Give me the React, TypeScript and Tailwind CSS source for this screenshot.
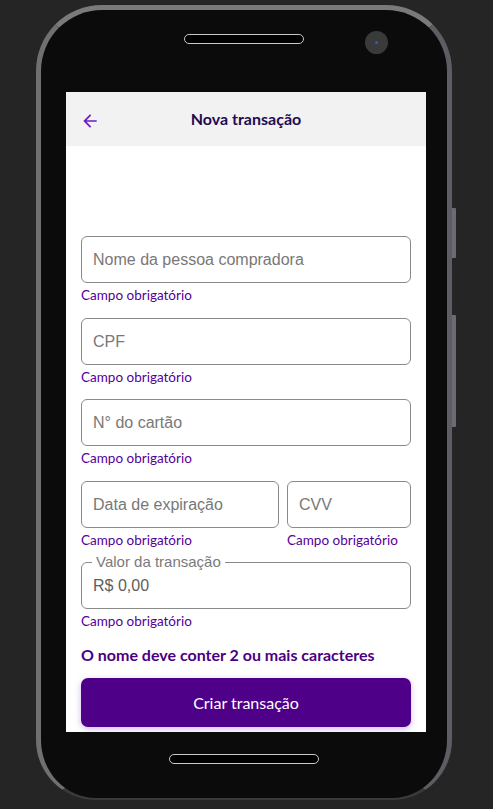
import React from "react";

const lato = { fontFamily: "Lato, 'Noto Sans', sans-serif" };

function Helper() {
  return (
    <div className="mt-[4px] text-[13.5px] leading-[16px] text-[#55009a]" style={lato}>
      Campo obrigatório
    </div>
  );
}

function Field({ placeholder, className = "" }: { placeholder: string; className?: string }) {
  return (
    <div className={className}>
      <div className="h-[47px] rounded-[6px] border border-[#8a8a8a] flex items-center px-[11px] text-[16px] text-[#787878] font-['Liberation_Sans',Arial,sans-serif]">
        {placeholder}
      </div>
      <Helper />
    </div>
  );
}

export default function App() {
  return (
    <div className="w-[493px] h-[809px] bg-[#252525] overflow-hidden pl-[36px] pt-[5px]">
      <div className="relative w-[416px] h-[795px]">
        {/* side buttons */}
        <div className="absolute left-[416px] top-[203px] w-[4px] h-[50px] bg-[#6c6a72] rounded-r-[1px]" />
        <div className="absolute left-[416px] top-[310px] w-[4px] h-[112px] bg-[#6c6a72] rounded-r-[1px]" />
        <div className="w-full h-full rounded-t-[66px] rounded-b-[60px] border-t-[5px] border-l-[5px] border-r-[5px] border-b-[2px] border-t-[#7a7a7a] border-l-[#707070] border-r-[#5f5d63] border-b-[#3a3a3a] bg-[#0b0b0b] flex flex-col">
          {/* top area */}
          <div className="relative h-[82px] shrink-0 flex justify-center pt-[24px]">
            <div className="w-[120px] h-[10px] rounded-full border-[1.5px] border-[#c8c8c8] bg-black" />
            <div className="absolute left-[324px] top-[21px] w-[23px] h-[23px] rounded-full bg-[#3a3a3a] flex items-center justify-center">
              <div className="w-[3px] h-[3px] rounded-full bg-[#2a5fd0]" />
            </div>
          </div>
          {/* screen */}
          <div className="ml-[25px] w-[360px] h-[640px] shrink-0 bg-white overflow-hidden flex flex-col">
            <div className="relative h-[54px] shrink-0 bg-[#f2f2f2] flex items-center justify-center">
              <svg className="absolute left-[14px] top-[19px]" width="20" height="20" viewBox="0 0 24 24" fill="#6c1cc0">
                <path d="M20 11H7.83l5.59-5.59L12 4l-8 8 8 8 1.41-1.41L7.83 13H20v-2z" />
              </svg>
              <div className="text-[16px] font-bold text-[#230b52]" style={lato}>
                Nova transação
              </div>
            </div>
            <div className="px-[15px] pt-[90px] flex flex-col">
              <Field placeholder="Nome da pessoa compradora" className="mb-[15px]" />
              <Field placeholder="CPF" className="mb-[14px]" />
              <Field placeholder="N° do cartão" className="mb-[15px]" />
              <div className="flex gap-[8px] mb-[14px]">
                <Field placeholder="Data de expiração" className="w-[198px]" />
                <Field placeholder="CVV" className="flex-1" />
              </div>
              <div>
                <div className="relative h-[47px] rounded-[6px] border border-[#8a8a8a] flex items-center px-[11px] text-[16px] text-[#5e5e5e] font-['Liberation_Sans',Arial,sans-serif]">
                  <span className="absolute left-[10px] -top-[10px] px-[4px] bg-white text-[15px] leading-[18px] text-[#7a7a7a]">
                    Valor da transação
                  </span>
                  R$ 0,00
                </div>
                <Helper />
              </div>
              <div className="mt-[16px] text-[16px] leading-[20px] font-bold text-[#4b0082]" style={lato}>
                O nome deve conter 2 ou mais caracteres
              </div>
              <button
                className="mt-[13px] h-[49px] w-full rounded-[7px] bg-[#4e0089] text-white text-[16px] shadow-[0_2px_6px_rgba(120,60,200,0.35)]"
                style={lato}
              >
                Criar transação
              </button>
            </div>
          </div>
          {/* bottom area */}
          <div className="flex-1 flex justify-center pt-[22px]">
            <div className="w-[150px] h-[10px] rounded-full border-[1.5px] border-[#c8c8c8] bg-black" />
          </div>
        </div>
      </div>
    </div>
  );
}
